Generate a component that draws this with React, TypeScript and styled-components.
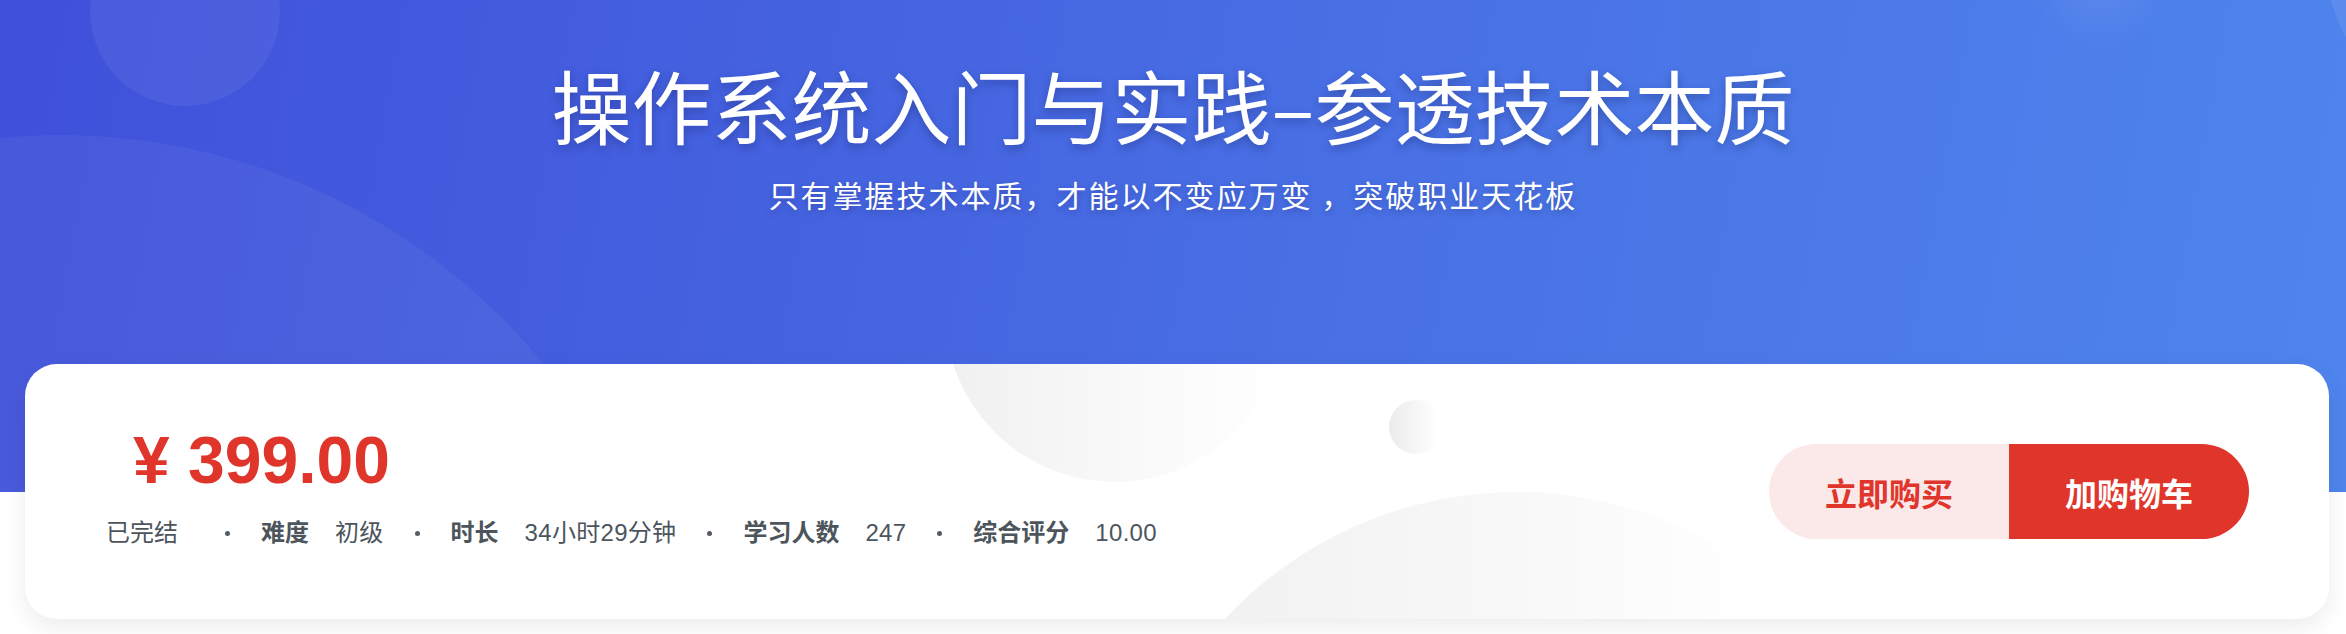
import styled, { createGlobalStyle } from 'styled-components';

const GlobalStyle = createGlobalStyle`
  html, body {
    margin: 0;
    padding: 0;
    background: #fff;
  }
  body {
    font-family: "Liberation Sans", "Noto Sans CJK SC", sans-serif;
  }
`;

interface IMetaItem {
  label: string;
  value: string;
}

const metaItems: IMetaItem[] = [
  { label: '难度', value: '初级' },
  { label: '时长', value: '34小时29分钟' },
  { label: '学习人数', value: '247' },
  { label: '综合评分', value: '10.00' },
];

export default function App() {
  return (
    <Page>
      <GlobalStyle />
      <Banner>
        <Bubble $left={90} $top={-84} $size={190} $bg="rgba(255,255,255,0.06)" />
        <Bubble $left={-565} $top={135} $size={1250} $bg="rgba(255,255,255,0.05)" />
        <Bubble $left={2030} $top={-90} $size={140} $bg="radial-gradient(circle, rgba(255,255,255,0.08), rgba(255,255,255,0) 70%)" />
        <Bubble $left={2326} $top={-200} $size={320} $bg="rgba(255,255,255,0.08)" />
        <Title>操作系统入门与实践–参透技术本质</Title>
        <Subtitle>只有掌握技术本质，才能以不变应万变 ，突破职业天花板</Subtitle>
      </Banner>

      <Card>
        <Bubble $left={920} $top={-222} $size={340} $bg="linear-gradient(90deg, #f0f0f0 0%, #fafafa 60%, #ffffff 100%)" />
        <Bubble $left={1364} $top={36} $size={54} $bg="linear-gradient(90deg, #ebebeb 0%, #ffffff 90%)" />
        <Bubble $left={1092} $top={128} $size={800} $bg="linear-gradient(90deg, #efefef 0%, #f8f8f8 50%, #ffffff 80%)" />

        <Info>
          <Price>¥ 399.00</Price>
          <Meta>
            <Status>已完结</Status>
            {metaItems.map((item) => (
              <MetaGroup key={item.label}>
                <Dot />
                <Label>{item.label}</Label>
                <Value>{item.value}</Value>
              </MetaGroup>
            ))}
          </Meta>
        </Info>

        <Actions>
          <BuyButton>立即购买</BuyButton>
          <CartButton>加购物车</CartButton>
        </Actions>
      </Card>
    </Page>
  );
}

const Page = styled.div`
  width: 2346px;
  height: 634px;
  overflow: hidden;
  background: #fff;
`;

const Banner = styled.div`
  position: relative;
  height: 492px;
  overflow: hidden;
  display: flex;
  flex-direction: column;
  align-items: center;
  padding-top: 63px;
  box-sizing: border-box;
  background: linear-gradient(100deg, #3f50da 0%, #4563e0 35%, #4a74e6 65%, #4f85ed 100%);
`;

const Bubble = styled.div<{ $left: number; $top: number; $size: number; $bg: string }>`
  position: absolute;
  left: ${(p) => p.$left}px;
  top: ${(p) => p.$top}px;
  width: ${(p) => p.$size}px;
  height: ${(p) => p.$size}px;
  border-radius: 50%;
  background: ${(p) => p.$bg};
  pointer-events: none;
  z-index: 0;
`;

const Title = styled.h1`
  position: relative;
  z-index: 1;
  margin: 0;
  font-family: "Noto Sans CJK SC", sans-serif;
  font-size: 80px;
  line-height: 80px;
  font-weight: 400;
  color: #fff;
  text-shadow: 0 4px 8px rgba(20, 30, 90, 0.35);
  white-space: nowrap;
`;

const Subtitle = styled.p`
  position: relative;
  z-index: 1;
  margin: 36px 0 0;
  font-family: "Noto Sans CJK SC", sans-serif;
  font-size: 30px;
  line-height: 30px;
  letter-spacing: 2px;
  color: #fff;
  text-shadow: 0 3px 6px rgba(20, 30, 90, 0.3);
  white-space: nowrap;
`;

const Card = styled.div`
  position: relative;
  overflow: hidden;
  margin: -128px 17px 0 25px;
  height: 255px;
  box-sizing: border-box;
  padding: 0 80px 0 81px;
  display: flex;
  justify-content: space-between;
  align-items: center;
  background: #fff;
  border-radius: 32px;
  box-shadow: 0 8px 24px rgba(0, 0, 0, 0.08);
`;

const Info = styled.div`
  position: relative;
  z-index: 1;
  align-self: flex-start;
  padding-top: 63px;
  display: flex;
  flex-direction: column;
`;

const Price = styled.div`
  padding-left: 27px;
  font-family: "Liberation Sans", sans-serif;
  font-size: 66px;
  line-height: 66px;
  font-weight: 700;
  color: #e0352b;
`;

const Meta = styled.div`
  margin-top: 28px;
  display: flex;
  align-items: center;
  font-size: 24px;
  line-height: 24px;
  color: #4d555c;
  white-space: nowrap;
`;

const Status = styled.span`
  margin-right: 16px;
`;

const MetaGroup = styled.span`
  display: flex;
  align-items: center;
`;

const Dot = styled.span`
  width: 5px;
  height: 5px;
  margin: 0 31px;
  border-radius: 50%;
  background: #545c63;
`;

const Label = styled.span`
  font-weight: 700;
  margin-right: 26px;
`;

const Value = styled.span`
  font-weight: 400;
  letter-spacing: 0.3px;
`;

const Actions = styled.div`
  position: relative;
  z-index: 1;
  display: flex;
  height: 95px;
  border-radius: 48px;
  overflow: hidden;
`;

const ActionButton = styled.button`
  width: 240px;
  height: 95px;
  border: 0;
  padding: 0;
  font-family: "Noto Sans CJK SC", sans-serif;
  font-size: 32px;
  font-weight: 700;
  cursor: pointer;
`;

const BuyButton = styled(ActionButton)`
  background: #fbe8e8;
  color: #e0352b;
`;

const CartButton = styled(ActionButton)`
  background: #e0352b;
  color: #fff;
`;
